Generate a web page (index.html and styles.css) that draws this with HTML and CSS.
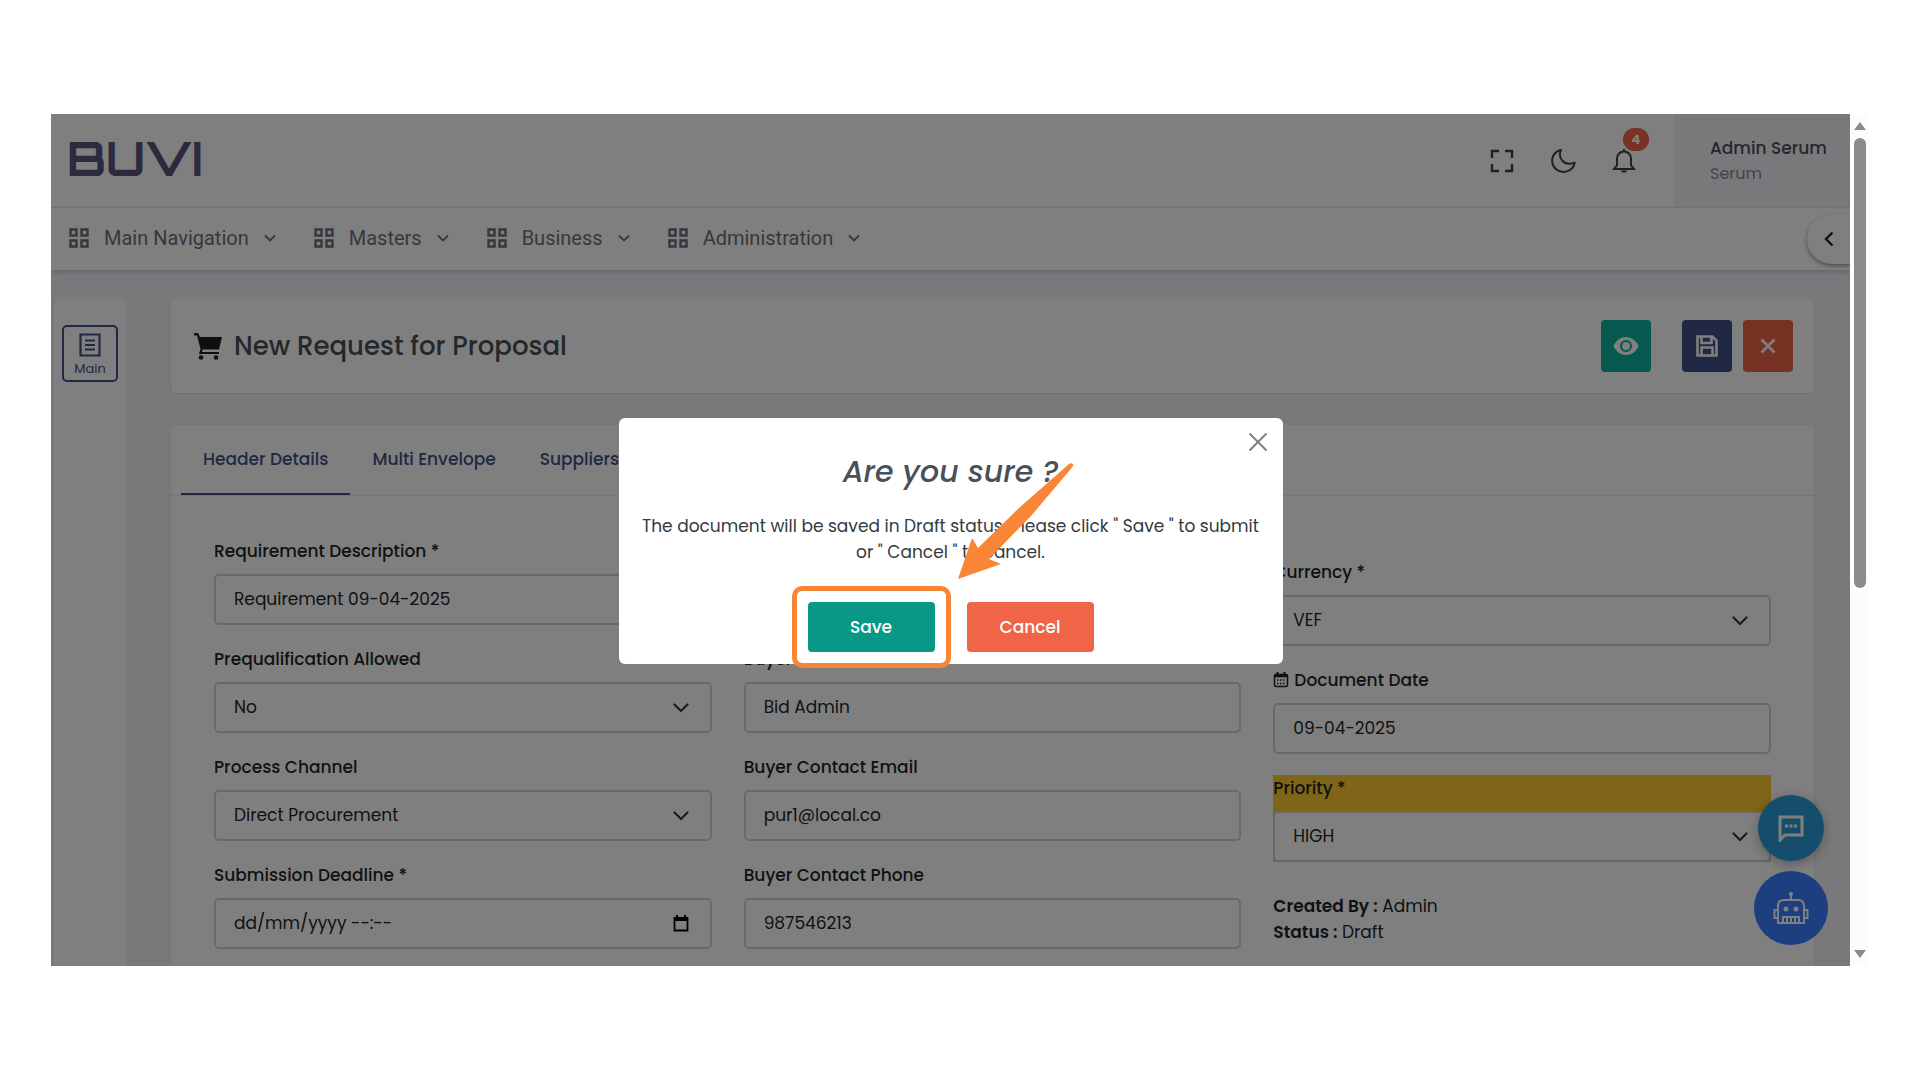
FILE: index.html
```html
<!DOCTYPE html>
<html lang="en">
<head>
    <meta charset="UTF-8">
    <meta name="viewport" content="width=device-width, initial-scale=1.0">
    <title>New Request for Proposal</title>
    <link rel="stylesheet" href="styles.css">
</head>
<body>
    <svg class="sprite" aria-hidden="true">
        <symbol id="icon-grid" viewBox="0 0 20 20">
            <path d="M1.5 1.5h6v6h-6zM12.5 1.5h6v6h-6zM1.5 12.5h6v6h-6zM12.5 12.5h6v6h-6z" fill="none" stroke="currentColor" stroke-width="2.4"/>
        </symbol>
        <symbol id="icon-down" viewBox="0 0 12 8">
            <path d="M1 1.5l5 5 5-5" fill="none" stroke="currentColor" stroke-width="1.8"/>
        </symbol>
    </svg>

    <div class="window">
        <div class="app">
            <header class="topbar">
                <a class="logo" href="#">BUVI</a>
                <div class="topbar-icons">
                    <button class="icon-button" aria-label="Fullscreen">
                        <svg width="24" height="24" viewBox="0 0 24 24" fill="none" stroke="currentColor" stroke-width="2.4"><path d="M9 2H2v7M15 2h7v7M22 15v7h-7M9 22H2v-7"/></svg>
                    </button>
                    <button class="icon-button" aria-label="Dark mode">
                        <svg width="26" height="26" viewBox="0 0 26 26" fill="none" stroke="currentColor" stroke-width="2" stroke-linejoin="round"><path d="M11 2C2.5 4 .5 12.500 3.500 18c3.500 6 11 7.500 16.500 4 2.700-1.700 4.200-4.200 4.700-7.300C13.500 18.500 7.500 10 11 2z"/></svg>
                    </button>
                    <button class="icon-button" aria-label="Notifications">
                        <svg width="26" height="26" viewBox="0 0 26 26" fill="none" stroke="currentColor" stroke-width="2"><path d="M13 3.500c-4 0-7 3-7 7v7L3 21h20l-3-3.500v-7c0-4-3-7-7-7zM13 1v2.500"/><path d="M10 22.500h6c0 3-6 3-6 0z" fill="currentColor" stroke="none"/></svg>
                        <span class="badge">4</span>
                    </button>
                </div>
                <div class="user">
                    <span class="user-name">Admin Serum</span>
                    <span class="user-role">Serum</span>
                </div>
            </header>

            <nav class="navbar">
                <a href="#"><svg class="nav-icon"><use href="#icon-grid"/></svg>Main Navigation<svg class="nav-arrow"><use href="#icon-down"/></svg></a>
                <a href="#"><svg class="nav-icon"><use href="#icon-grid"/></svg>Masters<svg class="nav-arrow"><use href="#icon-down"/></svg></a>
                <a href="#"><svg class="nav-icon"><use href="#icon-grid"/></svg>Business<svg class="nav-arrow"><use href="#icon-down"/></svg></a>
                <a href="#"><svg class="nav-icon"><use href="#icon-grid"/></svg>Administration<svg class="nav-arrow"><use href="#icon-down"/></svg></a>
                <button class="drawer-toggle" aria-label="Open panel">
                    <svg width="10" height="16" viewBox="0 0 10 16" fill="none" stroke="currentColor" stroke-width="2.4"><path d="M8.500 1.500L2 8l6.500 6.500"/></svg>
                </button>
            </nav>

            <div class="page">
                <aside class="sidebar">
                    <button class="side-button">
                        <svg width="22" height="24" viewBox="0 0 22 24" fill="none" stroke="currentColor" stroke-width="2.2"><path d="M1.500 1.500h19v21h-19zM6 7.500h10M6 12h10M6 16.500h10"/></svg>
                        Main
                    </button>
                </aside>

                <main class="content">
                    <section class="card title-card">
                        <svg width="28" height="28" viewBox="0 0 28 28" fill="#1c1f22"><path d="M0 1h4l2 4h22l-3 12.500H8.500L8 20h17v2H5l1.500-5L3 3.500H0z"/><circle cx="7" cy="25.500" r="2.300"/><circle cx="22" cy="25.500" r="2.300"/></svg>
                        <h1>New Request for Proposal</h1>
                        <div class="actions">
                            <button class="action view" aria-label="Preview">
                                <svg width="26" height="20" viewBox="0 0 26 20"><path d="M13 1C7 1 2.500 5 .5 10 2.500 15 7 19 13 19s10.500-4 12.500-9C23.500 5 19 1 13 1z" fill="currentColor"/><circle cx="13" cy="10" r="5" fill="none" stroke="#0ab39c" stroke-width="2.2"/></svg>
                            </button>
                            <button class="action store" aria-label="Save">
                                <svg width="22" height="22" viewBox="0 0 22 22" fill="none" stroke="currentColor" stroke-width="2.6"><path d="M1.500 1.500h15l4 4v15h-19zM5.500 1.500V8h10V1.500M5.500 20.500v-8h11v8"/></svg>
                            </button>
                            <button class="action close" aria-label="Close">
                                <svg width="16" height="16" viewBox="0 0 16 16" fill="none" stroke="currentColor" stroke-width="2.6"><path d="M1.500 1.500l13 13M14.500 1.500l-13 13"/></svg>
                            </button>
                        </div>
                    </section>

                    <section class="card form-card">
                        <div class="tabs">
                            <button class="tab active">Header Details</button>
                            <button class="tab">Multi Envelope</button>
                            <button class="tab">Suppliers</button>
                        </div>
                        <form class="form-grid">
                            <div class="form-col">
                                <div class="field">
                                    <label for="description">Requirement Description *</label>
                                    <input type="text" id="description" value="Requirement 09-04-2025">
                                </div>
                                <div class="field">
                                    <label for="prequal">Prequalification Allowed</label>
                                    <select id="prequal"><option>No</option></select>
                                </div>
                                <div class="field">
                                    <label for="channel">Process Channel</label>
                                    <select id="channel"><option>Direct Procurement</option></select>
                                </div>
                                <div class="field">
                                    <label for="deadline">Submission Deadline *</label>
                                    <input type="text" id="deadline" class="date-input" placeholder="dd/mm/yyyy --:--">
                                </div>
                            </div>
                            <div class="form-col buyer-col">
                                <div class="field">
                                    <label for="buyer">Buyer</label>
                                    <input type="text" id="buyer" value="Bid Admin">
                                </div>
                                <div class="field">
                                    <label for="email">Buyer Contact Email</label>
                                    <input type="email" id="email" value="pur1@local.co">
                                </div>
                                <div class="field">
                                    <label for="phone">Buyer Contact Phone</label>
                                    <input type="tel" id="phone" value="987546213">
                                </div>
                            </div>
                            <div class="form-col document-col">
                                <div class="field">
                                    <label for="currency">Currency *</label>
                                    <select id="currency"><option>VEF</option></select>
                                </div>
                                <div class="field">
                                    <label for="docdate">
                                        <svg width="16" height="16" viewBox="0 0 16 16" fill="none" stroke="currentColor"><rect x="1.500" y="2.500" width="13" height="12" rx="1.500" stroke-width="1.5"/><path d="M1.500 4h13" stroke-width="2.5"/><path d="M4.500 0v3M11.500 0v3" stroke-width="2"/><path d="M4 8h8M4 11.500h8" stroke-width="1.5" stroke-dasharray="1.5 1.5"/></svg>
                                        Document Date
                                    </label>
                                    <input type="text" id="docdate" value="09-04-2025">
                                </div>
                                <div class="field priority">
                                    <label for="priority">Priority *</label>
                                    <select id="priority"><option>HIGH</option></select>
                                </div>
                                <div class="meta">
                                    <div><b>Created By :</b> Admin</div>
                                    <div><b>Status :</b> Draft</div>
                                </div>
                            </div>
                        </form>
                    </section>
                </main>
            </div>

            <div class="floating">
                <button class="chat" aria-label="Chat">
                    <svg width="28" height="28" viewBox="0 0 28 28"><path d="M3 3h22v18H8l-5 5z" fill="none" stroke="currentColor" stroke-width="3"/><path d="M8 10.500h3v3H8zM12.500 10.500h3v3h-3zM17 10.500h3v3h-3z" fill="currentColor"/></svg>
                </button>
                <button class="bot" aria-label="Assistant">
                    <svg width="36" height="34" viewBox="0 0 36 34" fill="none" stroke="currentColor" stroke-width="2"><circle cx="18" cy="3" r="2" fill="currentColor" stroke="none"/><path d="M18 4v5M5 32V15c0-4 2.500-6 6-6h14c3.500 0 6 2 6 6v17zM5 19H1.500v8H5M31 19h3.500v8H31M10 32v-6h16v6M14 26v6M18 26v6M22 26v6"/><circle cx="13" cy="18" r="2.500" fill="currentColor" stroke="none"/><circle cx="23" cy="18" r="2.500" fill="currentColor" stroke="none"/></svg>
                </button>
            </div>

            <div class="backdrop"></div>

            <div class="modal" role="dialog" aria-labelledby="modalTitle">
                <button class="modal-close" aria-label="Close">
                    <svg width="20" height="20" viewBox="0 0 20 20" fill="none" stroke="currentColor" stroke-width="2"><path d="M1.500 1.500l17 17M18.500 1.500l-17 17"/></svg>
                </button>
                <h2 id="modalTitle">Are you sure ?</h2>
                <p>The document will be saved in Draft status. Please click " Save " to submit or " Cancel " to cancel.</p>
                <div class="modal-buttons">
                    <button class="modal-button save">Save</button>
                    <button class="modal-button cancel">Cancel</button>
                </div>
                <svg class="arrow" width="118" height="120" viewBox="0 0 118 120"><path d="M112 2c2-2 6 0 3.500 3L74 54 32 97l12 5L1 117 15 76l6 10 41-40z" fill="#f88636"/></svg>
            </div>
        </div>

        <div class="scrollbar">
            <svg width="12" height="8" viewBox="0 0 12 8"><path d="M6 0l6 8H0z" fill="#8b8b8b"/></svg>
            <div class="scroll-track"><div class="scroll-thumb"></div></div>
            <svg width="12" height="8" viewBox="0 0 12 8"><path d="M6 8l6-8H0z" fill="#8b8b8b"/></svg>
        </div>
    </div>
</body>
</html>
```
FILE: styles.css
```css
* {
    box-sizing: border-box;
}
body {
    margin: 0;
    padding: 114px 51px;
    background-color: #fff;
    font-family: Poppins, Inter, sans-serif;
    font-size: 17px;
    line-height: 26px;
    color: #212529;
}
button, input, select {
    font: inherit;
    color: inherit;
    margin: 0;
}
button {
    display: flex;
    align-items: center;
    justify-content: center;
    padding: 0;
    border: 0;
    background: none;
    cursor: pointer;
}
a {
    color: inherit;
    text-decoration: none;
}
.sprite {
    position: absolute;
    width: 0;
    height: 0;
}
.window {
    display: flex;
    height: calc(100vh - 228px);
}
.app {
    position: relative;
    flex: 1;
    display: flex;
    flex-direction: column;
    overflow: hidden;
    background-color: #f3f3f9;
}

/* top bar */
.topbar {
    display: flex;
    align-items: center;
    height: 94px;
    flex-shrink: 0;
    padding-left: 16px;
    background-color: #fff;
    border-bottom: 1px solid #e9ebec;
}
.logo {
    padding-bottom: 6px;
    font-family: Orbitron, "DejaVu Sans", sans-serif;
    font-size: 47px;
    font-weight: 700;
    line-height: 50px;
    color: #5a547c;
}
.topbar-icons {
    display: flex;
    gap: 35px;
    margin-left: auto;
    margin-right: 37px;
}
.icon-button {
    position: relative;
    width: 26px;
    height: 26px;
    color: #3a4048;
}
.badge {
    position: absolute;
    left: 12px;
    top: -20px;
    width: 26px;
    height: 23px;
    border-radius: 12px;
    background-color: #f06548;
    color: #fff;
    font-size: 13px;
    font-weight: 700;
    line-height: 23px;
}
.user {
    display: flex;
    flex-direction: column;
    align-self: stretch;
    justify-content: center;
    width: 176px;
    padding-left: 36px;
    background-color: #f3f3f9;
}
.user-name {
    font-weight: 500;
    color: #495057;
    white-space: nowrap;
}
.user-role {
    font-size: 16px;
    color: #878a99;
}

/* menu */
.navbar {
    position: relative;
    z-index: 1;
    display: flex;
    align-items: center;
    gap: 38px;
    height: 62px;
    flex-shrink: 0;
    padding-left: 18px;
    background-color: #fff;
    box-shadow: 0 2px 5px rgba(15, 34, 58, .2);
    font-family: Roboto, sans-serif;
    font-size: 20px;
    color: #6d7080;
}
.navbar a {
    display: flex;
    align-items: center;
    gap: 15px;
    padding-bottom: 2px;
}
.nav-icon {
    width: 20px;
    height: 20px;
}
.nav-arrow {
    width: 12px;
    height: 8px;
}
.drawer-toggle {
    margin-left: auto;
    width: 43px;
    height: 50px;
    border-radius: 25px 0 0 25px;
    background-color: #fff;
    box-shadow: 0 2px 4px rgba(0, 0, 0, .4);
    color: #212529;
}

/* page */
.page {
    display: flex;
    gap: 45px;
    flex: 1;
    min-height: 0;
    padding: 29px 36px 0 3px;
}
.sidebar {
    width: 72px;
    padding: 26px 8px;
    border-radius: 5px 5px 0 0;
    background-color: #fff;
}
.side-button {
    flex-direction: column;
    gap: 2px;
    width: 56px;
    height: 57px;
    padding-top: 4px;
    border: 2px solid #405189;
    border-radius: 5px;
    color: #405189;
    font-size: 13px;
    line-height: 20px;
}
.content {
    flex: 1;
}
.card {
    border-radius: 5px;
    background-color: #fff;
    box-shadow: 0 1px 2px rgba(56, 65, 74, .15);
}
.title-card {
    display: flex;
    align-items: center;
    gap: 12px;
    height: 94px;
    margin-bottom: 32px;
    padding: 0 21px 0 23px;
}
h1 {
    margin: 0;
    font-size: 26px;
    font-weight: 500;
    color: #495057;
}
.actions {
    display: flex;
    gap: 11px;
    margin-left: auto;
}
.action {
    width: 50px;
    height: 52px;
    border-radius: 4px;
    color: #fff;
}
.view {
    margin-right: 20px;
    background-color: #0ab39c;
}
.store {
    background-color: #405189;
}
.close {
    background-color: #f06548;
}

/* form */
.tabs {
    display: flex;
    height: 71px;
    padding-left: 10px;
    border-bottom: 1px solid #e9ebec;
}
.tab {
    padding: 0 22px;
    border-bottom: 2px solid transparent;
    color: #405189;
    font-weight: 500;
}
.tab.active {
    border-bottom-color: #405189;
}
.form-grid {
    display: grid;
    grid-template-columns: repeat(3, 1fr);
    gap: 32px;
    padding: 42px 43px;
}
.form-col {
    display: flex;
    flex-direction: column;
    gap: 21px;
}
.buyer-col {
    padding-top: 108px;
}
.document-col {
    padding-top: 21px;
}
.field {
    display: flex;
    flex-direction: column;
    gap: 10px;
}
.field label {
    display: flex;
    align-items: center;
    gap: 5px;
    font-weight: 500;
}
.field input, .field select {
    width: 100%;
    height: 51px;
    padding: 0 18px 2px;
    border: 2px solid #ced4da;
    border-radius: 5px;
    background-color: #fff;
    outline: none;
}
.field select {
    appearance: none;
    background-image: url("data:image/svg+xml,%3Csvg xmlns='http://www.w3.org/2000/svg' viewBox='0 0 16 10'%3E%3Cpath d='M1.500 1.500L8 8l6.500-6.500' fill='none' stroke='%23343a40' stroke-width='2.200' stroke-linecap='round'/%3E%3C/svg%3E");
    background-repeat: no-repeat;
    background-position: right 21px center;
    background-size: 16px 10px;
}
.field .date-input {
    background-image: url("data:image/svg+xml,%3Csvg xmlns='http://www.w3.org/2000/svg' viewBox='0 0 16 17'%3E%3Cpath d='M1.500 3h13v12.500h-13z' fill='none' stroke='%23000' stroke-width='1.800'/%3E%3Cpath d='M1 2h14v4H1zM3 0h2v3H3zM11 0h2v3h-2z'/%3E%3C/svg%3E");
    background-repeat: no-repeat;
    background-position: right 21px center;
    background-size: 16px 17px;
}
.date-input::placeholder {
    color: #212529;
    opacity: 1;
}
.priority {
    background-color: #ffcb2e;
}
.meta {
    padding-top: 10px;
}
.meta b {
    font-weight: 600;
}

/* floating buttons */
.floating {
    position: absolute;
    right: 22px;
    bottom: 21px;
    display: flex;
    flex-direction: column;
    align-items: center;
    gap: 10px;
    color: #fff;
}
.chat {
    width: 66px;
    height: 66px;
    border-radius: 50%;
    background-color: #289cd8;
    box-shadow: 0 3px 12px rgba(0, 0, 0, .3);
}
.bot {
    width: 74px;
    height: 74px;
    border-radius: 50%;
    background-color: #3a7eff;
}

/* confirm dialog */
.backdrop {
    position: absolute;
    inset: 0;
    z-index: 2;
    background-color: rgba(0, 0, 0, .5);
}
.modal {
    position: absolute;
    z-index: 3;
    left: 50%;
    top: 304px;
    width: 664px;
    height: 246px;
    margin-left: -332px;
    padding: 38px 16px 0;
    border-radius: 6px;
    background-color: #fff;
    text-align: center;
}
.modal-close {
    position: absolute;
    top: 14px;
    right: 15px;
    color: #808080;
}
.modal h2 {
    margin: 0 0 25px;
    font-size: 30px;
    font-style: italic;
    font-weight: 500;
    line-height: 32px;
    color: #495057;
}
.modal p {
    margin: 0 0 37px;
    color: #343a40;
}
.modal-buttons {
    display: flex;
    justify-content: center;
    gap: 32px;
}
.modal-button {
    position: relative;
    width: 127px;
    height: 50px;
    border-radius: 4px;
    color: #fff;
    font-weight: 500;
}
.save {
    background-color: #099885;
}
.save::after {
    content: "";
    position: absolute;
    inset: -16px;
    border: 5px solid #f88636;
    border-radius: 10px;
}
.cancel {
    background-color: #f06548;
}
.arrow {
    position: absolute;
    left: 338px;
    top: 44px;
}

/* scrollbar */
.scrollbar {
    display: flex;
    flex-direction: column;
    align-items: center;
    gap: 8px;
    width: 19px;
    padding: 8px 0;
    background-color: #fcfcfc;
}
.scroll-track {
    flex: 1;
}
.scroll-thumb {
    width: 12px;
    height: 56%;
    border-radius: 6px;
    background-color: #8b8b8b;
}
```
